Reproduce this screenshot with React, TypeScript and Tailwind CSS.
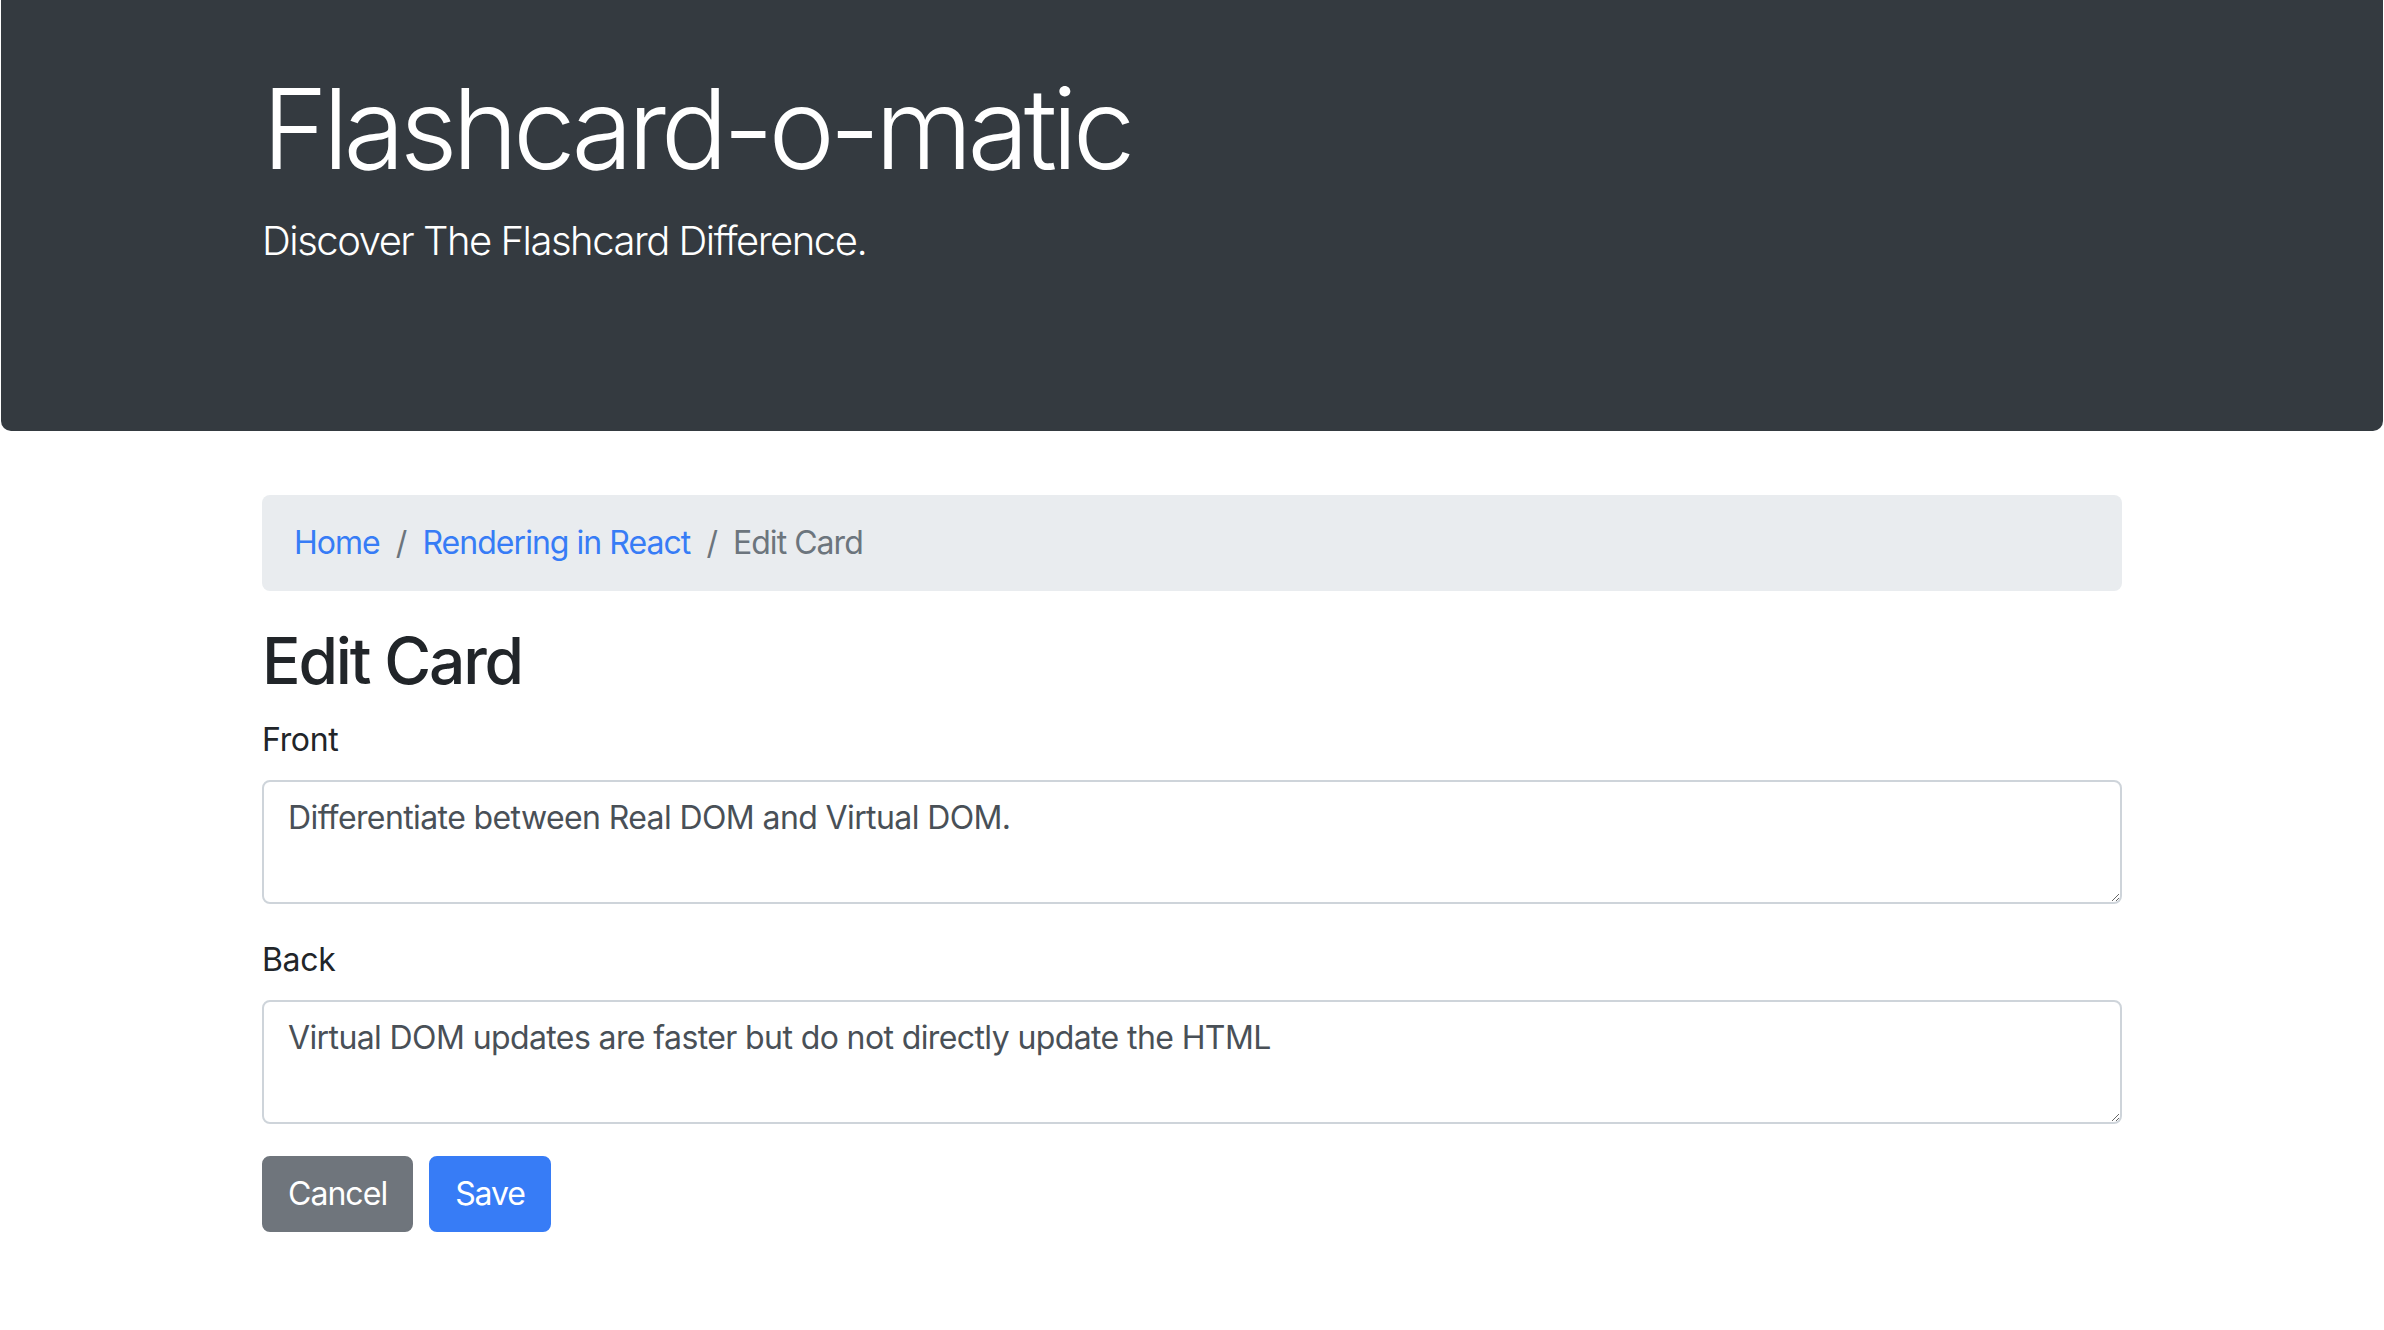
import React from "react";

const crumbs = [
  { label: "Home", href: "#" },
  { label: "Rendering in React", href: "#" },
];

function Header() {
  return (
    <header className="mx-px rounded-b-[10px] bg-[#343a40] pt-[61px] pb-[128px] text-white">
      <div className="mx-auto w-[1920px] px-[30px]">
        <h1 className="mb-4 text-[112px] font-light leading-[1.2] tracking-[-0.047em]">Flashcard-o-matic</h1>
        <p className="mb-8 text-[40px] font-light leading-[1.5] tracking-[-0.037em]">
          Discover The Flashcard Difference.
        </p>
      </div>
    </header>
  );
}

function Breadcrumb() {
  return (
    <nav>
      <ol className="mb-8 flex flex-wrap rounded-[8px] bg-[#e9ecef] px-8 py-6 text-[32px] leading-[1.5] tracking-[-0.03em]">
        {crumbs.map((c, i) => (
          <li key={c.label} className={i > 0 ? "flex pl-4" : "flex"}>
            {i > 0 && <span className="pr-4 text-[#6c757d]">/</span>}
            <a href={c.href} className="text-[#377cf6]">
              {c.label}
            </a>
          </li>
        ))}
        <li className="flex pl-4 text-[#6c757d]">
          <span className="pr-4">/</span>
          Edit Card
        </li>
      </ol>
    </nav>
  );
}

function Field({ id, label, value }: { id: string; label: string; value: string }) {
  return (
    <div className="mb-8">
      <label htmlFor={id} className="mb-4 block text-[32px] leading-[48px] text-[#212529]">
        {label}
      </label>
      <textarea
        id={id}
        rows={2}
        defaultValue={value}
        className="block w-full rounded-[8px] border-2 border-[#ced4da] bg-white px-6 py-3 text-[32px] leading-[48px] tracking-[-0.019em] text-[#495057] outline-none"
      />
    </div>
  );
}

export default function App() {
  return (
    <div className="min-h-[1330px] bg-white font-[Inter,sans-serif] tracking-[-0.02em] text-[#212529]">
      <Header />
      <div className="mx-auto mt-16 w-[1920px] px-[30px]">
        <Breadcrumb />
        <h2 className="mb-4 text-[64px] font-medium leading-[1.2] tracking-[-0.034em]">Edit Card</h2>
        <form>
          <Field id="front" label="Front" value="Differentiate between Real DOM and Virtual DOM." />
          <Field id="back" label="Back" value="Virtual DOM updates are faster but do not directly update the HTML" />
          <div className="flex">
            <button
              type="button"
              className="mr-4 rounded-[8px] border-2 border-[#6f757c] bg-[#6f757c] px-6 py-3 text-[32px] leading-[48px] tracking-[-0.03em] text-white"
            >
              Cancel
            </button>
            <button
              type="submit"
              className="rounded-[8px] border-2 border-[#377cf6] bg-[#377cf6] px-6 py-3 text-[32px] leading-[48px] tracking-[-0.035em] text-white"
            >
              Save
            </button>
          </div>
        </form>
      </div>
    </div>
  );
}
